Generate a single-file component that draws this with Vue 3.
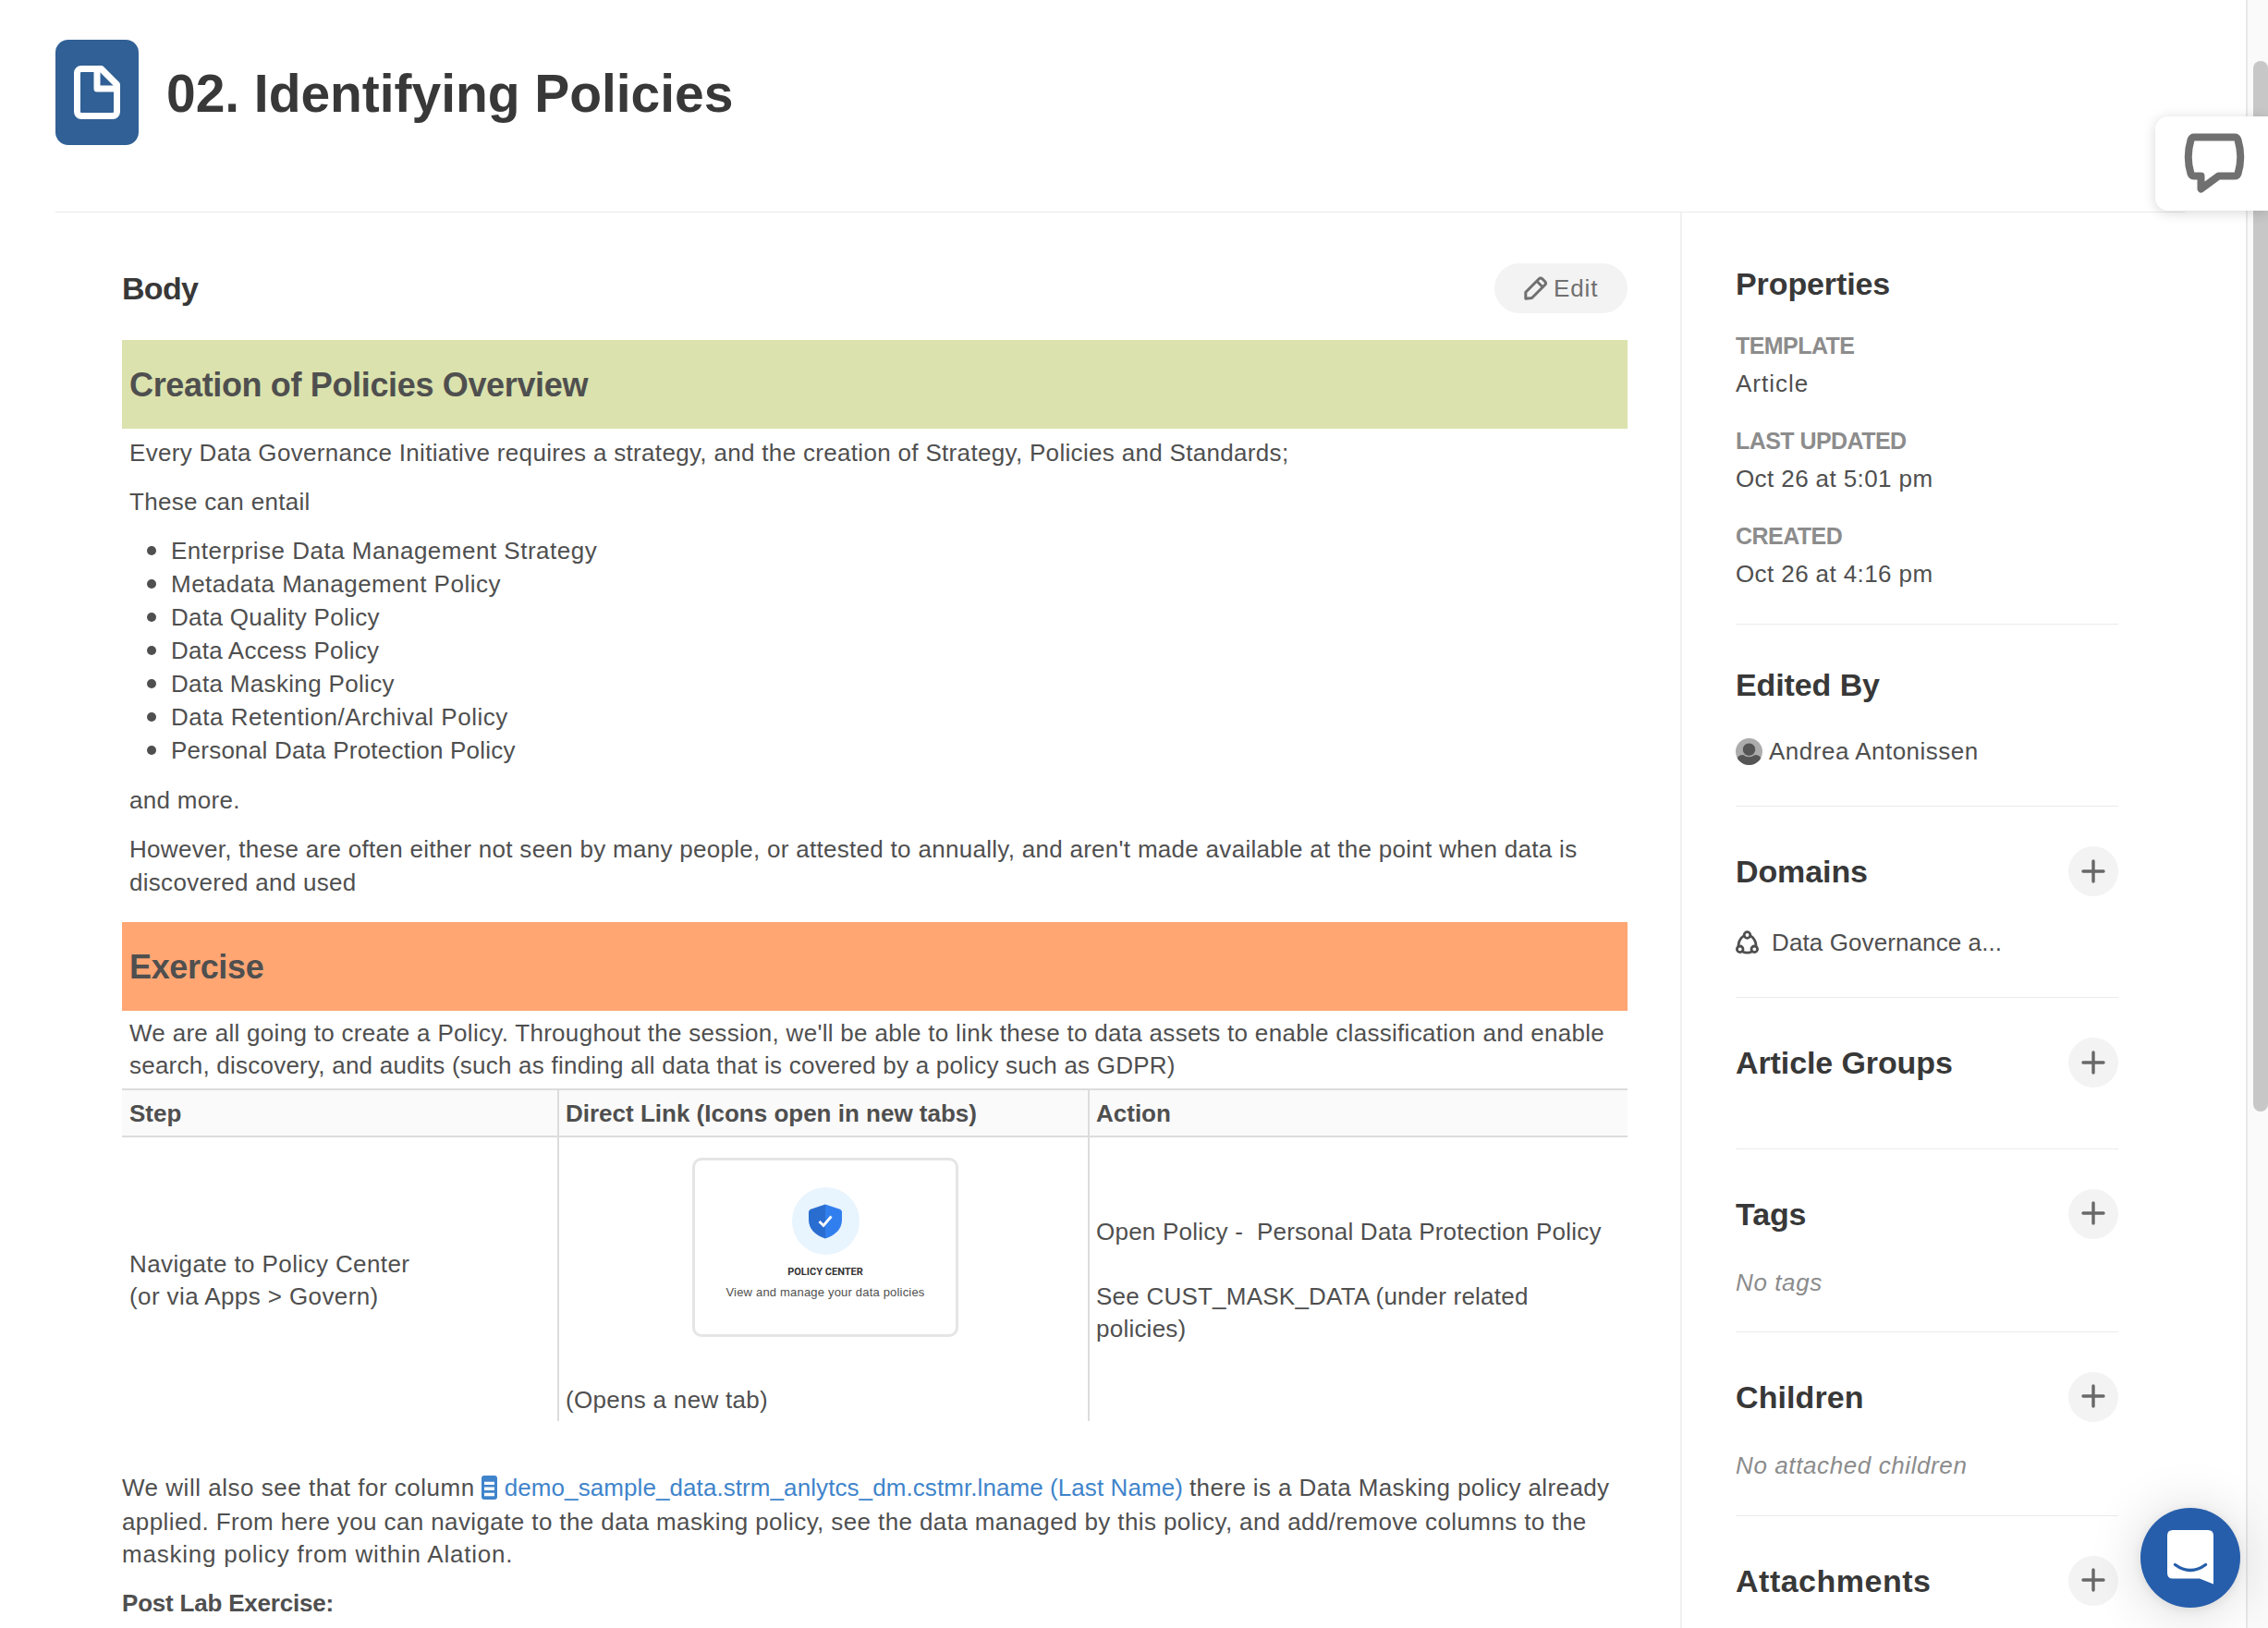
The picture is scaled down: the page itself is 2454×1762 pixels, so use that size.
<script setup>
const policies = [
  { name: 'Enterprise Data Management Strategy', cls: 'wide' },
  { name: 'Metadata Management Policy', cls: 'wide' },
  { name: 'Data Quality Policy' },
  { name: 'Data Access Policy', cls: 'tight' },
  { name: 'Data Masking Policy' },
  { name: 'Data Retention/Archival Policy', cls: 'wide' },
  { name: 'Personal Data Protection Policy', cls: 'tight' },
]
const properties = [
  { label: 'Template', value: 'Article', cls: 'loose' },
  { label: 'Last updated', value: 'Oct 26 at 5:01 pm' },
  { label: 'Created', value: 'Oct 26 at 4:16 pm' },
]
const sections = [
  { key: 'domains', title: 'Domains', item: 'Data Governance a...' },
  { key: 'groups', title: 'Article Groups' },
  { key: 'tags', title: 'Tags', empty: 'No tags' },
  { key: 'children', title: 'Children', empty: 'No attached children' },
  { key: 'attachments', title: 'Attachments' },
]
</script>

<template>
  <div class="page">
    <div class="content">
      <header class="header">
        <div class="doc-badge">
          <svg width="50" height="58" viewBox="0 0 50 58" fill="none" stroke="#fff" stroke-width="7" stroke-linejoin="round">
            <path d="M8 3.5H29.500L46.500 20.500V50a4.500 4.500 0 0 1-4.500 4.500H8A4.500 4.500 0 0 1 3.500 50V8A4.500 4.500 0 0 1 8 3.500Z" />
            <path d="M25 4V25H46" />
          </svg>
        </div>
        <h1>02. Identifying Policies</h1>
      </header>

      <div class="columns">
        <main class="main">
          <div class="body-head">
            <h2>Body</h2>
            <button class="edit">
              <svg width="25" height="26" viewBox="0 0 25 26" fill="none" stroke="#707070" stroke-width="3" stroke-linejoin="round">
                <path d="M1.800 24.200V17.200L16 3Q18 1 20 3L22.500 5.500Q24.500 7.500 22.500 9.500L8.500 23.500Z" />
                <path d="M13.800 5.300L20.500 12" />
              </svg>
              <span>Edit</span>
            </button>
          </div>

          <h3 class="band green">Creation of Policies Overview</h3>
          <div class="overview">
            <p class="every">Every Data Governance Initiative requires a strategy, and the creation of Strategy, Policies and Standards;</p>
            <p class="entail">These can entail</p>
            <ul>
              <li v-for="p in policies" :key="p.name" :class="p.cls">{{ p.name }}</li>
            </ul>
            <p class="more">and more.</p>
            <p class="however">However, these are often either not seen by many people, or attested to annually, and aren't made available at the point when data is<br>discovered and used</p>
          </div>

          <h3 class="band orange">Exercise</h3>
          <p class="exercise">We are all going to create a Policy. Throughout the session, we'll be able to link these to data assets to enable classification and enable<br><span class="search">search, discovery, and audits (such as finding all data that is covered by a policy such as GDPR)</span></p>

          <div class="table">
            <div class="row head">
              <div class="cell c1">Step</div>
              <div class="cell c2">Direct Link (Icons open in new tabs)</div>
              <div class="cell c3">Action</div>
            </div>
            <div class="row data">
              <div class="cell c1">Navigate to Policy Center<br>(or via Apps &gt; Govern)</div>
              <div class="cell c2">
                <div class="card">
                  <div class="halo">
                    <svg width="36" height="38" viewBox="0 0 36 38">
                      <path d="M18 .5L3 5.500Q0 6.500 0 9V17C0 27 7 34 18 37.500Z" fill="#2a6dd0" />
                      <path d="M18 .5L33 5.500Q36 6.500 36 9V17C36 27 29 34 18 37.500Z" fill="#317fee" />
                      <path d="M11.500 19L16 23.500L24.500 13.500" fill="none" stroke="#fff" stroke-width="2.800" />
                    </svg>
                  </div>
                  <div class="card-title">POLICY CENTER</div>
                  <div class="card-text">View and manage your data policies</div>
                </div>
                <div class="opens">(Opens a new tab)</div>
              </div>
              <div class="cell c3">Open Policy -&nbsp; Personal Data Protection Policy<br><br>See CUST_MASK_DATA (under related<br>policies)</div>
            </div>
          </div>

          <div class="closing">
            <div class="line first">
              <span class="before">We will also see that for column</span>
              <a>
                <svg width="17" height="26" viewBox="0 0 17 26">
                  <rect width="17" height="26" rx="3" fill="#3f84cb" />
                  <path d="M3 8.400h11M3 14.300h11M3 20.500h11" stroke="#fff" stroke-width="3.400" />
                </svg>
                <span class="link">demo_sample_data.strm_anlytcs_dm.cstmr.lname (Last Name)</span>
              </a>
              <span class="after">there is a Data Masking policy already</span>
            </div>
            <div class="line second">applied. From here you can navigate to the data masking policy, see the data managed by this policy, and add/remove columns to the</div>
            <div class="line last">masking policy from within Alation.</div>
            <div class="line post">Post Lab Exercise:</div>
          </div>
        </main>

        <aside class="side">
          <section class="props">
            <h2>Properties</h2>
            <div v-for="p in properties" :key="p.label" class="prop">
              <div class="label">{{ p.label }}</div>
              <div :class="['value', p.cls]">{{ p.value }}</div>
            </div>
          </section>
          <section class="edited">
            <h2>Edited By</h2>
            <div class="person">
              <svg width="29" height="29" viewBox="0 0 29 29">
                <clipPath id="avatar"><circle cx="14.500" cy="14.500" r="14.500" /></clipPath>
                <g clip-path="url(#avatar)">
                  <rect width="29" height="29" fill="#acacac" />
                  <path d="M1.500 29V22Q3 18 8 18Q14.500 22.500 21 18Q26 18 27.500 22V29Z" fill="#555" />
                  <circle cx="14.500" cy="12.200" r="7.200" fill="#555" stroke="#acacac" stroke-width="1" />
                </g>
              </svg>
              <span>Andrea Antonissen</span>
            </div>
          </section>
          <section v-for="s in sections" :key="s.key" :class="['group', s.key]">
            <div class="group-head">
              <h2>{{ s.title }}</h2>
              <button class="add">
                <svg width="26" height="26" viewBox="0 0 26 26" stroke="#686868" stroke-width="3.400" stroke-linecap="round">
                  <path d="M13 2V24M2 13H24" />
                </svg>
              </button>
            </div>
            <div v-if="s.item" class="domain">
              <svg width="25" height="26" viewBox="0 0 25 26" fill="none" stroke="#4f4f4f" stroke-width="2.800">
                <circle cx="12.500" cy="5" r="3.300" />
                <circle cx="4.700" cy="20.300" r="3.300" />
                <circle cx="20.300" cy="20.300" r="3.300" />
                <path d="M9.500 5.500Q3 9 2.900 17.500M15.500 5.500Q22 9 22.100 17.500M7 22.800Q12.500 25.500 18 22.800" />
              </svg>
              <span>{{ s.item }}</span>
            </div>
            <div v-if="s.empty" class="empty">{{ s.empty }}</div>
          </section>
        </aside>
      </div>
    </div>

    <div class="gutter"><div class="thumb"></div></div>

    <div class="feedback">
      <svg width="66" height="66" viewBox="0 0 66 66" fill="none" stroke="#707070" stroke-width="8" stroke-linejoin="round">
        <path d="M11 4.500H55Q57.500 4.500 58.500 7.500Q64 26 58.500 44Q57.500 46.500 55 46.500H37.500L18.500 60.500V46.500H11Q8.500 46.500 7.500 44Q2 26 7.500 7.500Q8.500 4.500 11 4.500Z" />
      </svg>
    </div>

    <div class="messenger">
      <svg width="50" height="60" viewBox="0 0 50 60">
        <path d="M6 0H44Q50 0 50 6V58.500L35 52.500H6Q0 52.500 0 46.500V6Q0 0 6 0Z" fill="#fff" />
        <path d="M8.500 37.500Q25 49.500 41.500 37.500" fill="none" stroke="#265eab" stroke-width="3.400" stroke-linecap="round" />
      </svg>
    </div>
  </div>
</template>

<style>
body { margin: 0; overflow: hidden; }
</style>

<style scoped>
* { box-sizing: border-box; }
.page {
  position: relative;
  display: flex;
  width: 2454px;
  height: 1762px;
  overflow: hidden;
  background: #fff;
  color: #4f4f4f;
  font: 26px/36px "Liberation Sans", Arial, sans-serif;
  letter-spacing: 0.3px;
  white-space: nowrap;
}
h1, h2, h3, p, ul { margin: 0; padding: 0; }
button { border: 0; padding: 0; font: inherit; letter-spacing: inherit; }
svg { display: block; flex: none; }
.content { width: 2430px; padding: 0 66px 0 60px; }
.header {
  display: flex;
  gap: 30px;
  height: 230px;
  padding-top: 43px;
  border-bottom: 1px solid #ebebeb;
}
.doc-badge {
  display: flex;
  align-items: center;
  justify-content: center;
  width: 90px;
  height: 114px;
  border-radius: 14px;
  background: #306095;
}
h1 { color: #383838; font-size: 57px; line-height: 116px; letter-spacing: -0.05px; }
h2 { color: #383838; font-size: 34px; line-height: 40px; letter-spacing: -0.1px; }
.columns { display: flex; }
.main { width: 1758px; padding: 55px 57px 0 72px; }
.body-head { display: flex; justify-content: space-between; align-items: center; height: 54px; margin-bottom: 29px; }
.body-head h2 { letter-spacing: -0.7px; }
.edit {
  display: flex;
  align-items: center;
  gap: 7px;
  width: 144px;
  height: 54px;
  padding-left: 32px;
  border-radius: 27px;
  background: #f3f3f3;
  color: #707070;
  letter-spacing: 0.9px;
}
.band { height: 96px; padding-left: 8px; font-size: 36px; line-height: 97px; letter-spacing: -0.35px; }
.green { background: #dbe2ad; }
.orange { background: #ffa673; }
.overview { height: 533.500px; padding: 8px 0 0 8px; }
.overview p { margin-bottom: 18px; }
.overview .every { margin-bottom: 17px; letter-spacing: 0.32px; }
.overview .more { margin-bottom: 17px; }
.overview .however { letter-spacing: 0.29px; }
.overview ul { margin: -1px 0 18px; padding-left: 45px; list-style: none; }
li { position: relative; letter-spacing: 0.33px; }
li::before {
  position: absolute;
  left: -26px;
  top: 13px;
  width: 10px;
  height: 10px;
  border-radius: 50%;
  background: #4f4f4f;
  content: "";
}
.wide { letter-spacing: 0.5px; }
.tight { letter-spacing: 0.23px; }
.exercise { height: 84.500px; padding: 7.500px 0 0 8px; line-height: 35.2px; }
.search { letter-spacing: 0.23px; }
.row { display: flex; }
.head { height: 53px; border: solid #dcdcdc; border-width: 2px 0; background: #fafafa; font-weight: 700; letter-spacing: 0; }
.head .cell { line-height: 51px; }
.data { height: 307px; }
.cell { padding-left: 7px; border-right: 2px solid #dcdcdc; line-height: 35.2px; }
.c1 { width: 473px; padding-left: 8px; }
.c2 { width: 574px; }
.c3 { width: 582px; border-right: 0; }
.data .c1 { padding-top: 120px; letter-spacing: 0.4px; }
.data .c3 { padding-top: 84.500px; letter-spacing: 0.23px; }
.card {
  display: flex;
  flex-direction: column;
  align-items: center;
  width: 288px;
  height: 194px;
  margin: 22px 0 51px 137px;
  padding-top: 29px;
  border: 3px solid #e5e5e5;
  border-radius: 10px;
}
.halo { display: flex; align-items: center; justify-content: center; width: 73px; height: 73px; border-radius: 50%; background: #e8f4fe; }
.card-title { margin-top: 9px; color: #333; font-family: Roboto, sans-serif; font-size: 11px; line-height: 20px; font-weight: 700; letter-spacing: 0; }
.card-text { font-size: 13px; line-height: 23px; letter-spacing: 0.19px; }
.closing { padding-top: 54px; }
.line { line-height: 36px; }
.first { display: flex; gap: 7px; margin-bottom: 1px; }
.first a { display: flex; gap: 8px; align-items: center; color: #3f84cb; }
.before { letter-spacing: 0.52px; }
.link { letter-spacing: 0.08px; }
.after { letter-spacing: 0.4px; }
.second { letter-spacing: 0.39px; }
.last { margin-top: -1px; letter-spacing: 0.78px; }
.post { margin-top: 17px; font-weight: 700; letter-spacing: -0.2px; }
.side { width: 474px; height: 1532px; padding-left: 58px; border-left: 2px solid #f1f1f1; }
section { border-bottom: 1px solid #ebebeb; }
.side section { width: 414px; }
.props { height: 446px; padding-top: 57px; }
.props h2 { margin-bottom: 29px; }
.prop { margin-bottom: 27px; }
.label { margin-bottom: 4px; color: #8c8c8c; font-size: 25px; font-weight: 700; letter-spacing: -0.55px; text-transform: uppercase; }
.value { position: relative; top: 0.5px; letter-spacing: 0.4px; }
.value.loose { letter-spacing: 1px; }
.edited { height: 197px; padding-top: 45px; }
.person { display: flex; align-items: center; gap: 7px; margin-top: 34px; letter-spacing: 0.5px; }
.group { padding-top: 43px; }
.group-head { display: flex; align-items: center; justify-content: space-between; height: 54px; }
.add { display: flex; align-items: center; justify-content: center; width: 54px; height: 54px; border-radius: 50%; background: #f3f3f3; }
.tags .add, .children .add, .attachments .add { padding-bottom: 2px; }
.domains { height: 207px; }
.domain { display: flex; align-items: center; gap: 14px; margin-top: 32px; letter-spacing: 0.1px; }
.groups { height: 164px; }
.tags { height: 198px; }
.children { height: 199px; }
.children h2 { letter-spacing: 0.1px; }
.attachments { border: 0; }
.attachments h2 { letter-spacing: 0.5px; }
.empty { margin-top: 29px; color: #8c8c8c; font-style: italic; letter-spacing: 0.6px; }
.gutter { width: 24px; padding: 66px 0 0 6px; border-left: 2px solid #e8e8e8; background: #fafafa; }
.thumb { width: 16px; height: 1137px; border-radius: 8px; background: #c7c7c7; }
.feedback {
  position: absolute;
  right: 0;
  top: 126px;
  width: 122px;
  height: 102px;
  padding: 18px 0 0 31px;
  border-radius: 14px 0 0 14px;
  background: #fff;
  box-shadow: 0 2px 14px rgba(0, 0, 0, 0.16);
}
.messenger {
  position: absolute;
  left: 2316px;
  top: 1632px;
  display: flex;
  align-items: center;
  justify-content: center;
  width: 108px;
  height: 108px;
  border-radius: 50%;
  background: #265eab;
  box-shadow: 0 2px 12px rgba(0, 0, 0, 0.08), 0 4px 60px rgba(0, 0, 0, 0.16);
}
</style>
